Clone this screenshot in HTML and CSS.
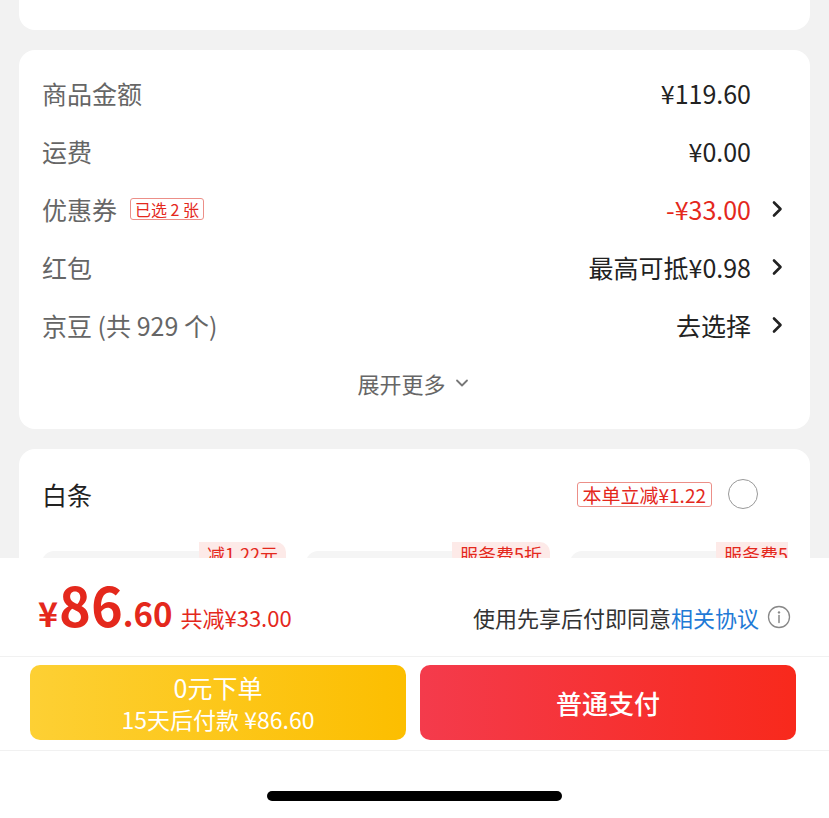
FILE: index.html
```html
<!DOCTYPE html>
<html lang="zh-CN">
<head>
    <meta charset="UTF-8">
    <meta name="viewport" content="width=device-width, initial-scale=1.0">
    <title>确认订单</title>
    <link rel="stylesheet" href="styles.css">
</head>
<body>
    <div class="page">
        <div class="card card-top"></div>

        <div class="card summary">
            <div class="row">
                <span class="label">商品金额</span>
                <span class="value">¥119.60</span>
            </div>
            <div class="row">
                <span class="label">运费</span>
                <span class="value">¥0.00</span>
            </div>
            <div class="row">
                <span class="label">优惠券 <span class="tag tag-small">已选 2 张</span></span>
                <span class="value red">-¥33.00
                    <span class="arrow"><svg width="12" height="18" viewBox="0 0 12 18"><path d="M3 2.5 L9.5 9 L3 15.5" fill="none" stroke="#222" stroke-width="2.6" stroke-linecap="round" stroke-linejoin="round"/></svg></span>
                </span>
            </div>
            <div class="row">
                <span class="label">红包</span>
                <span class="value">最高可抵¥0.98
                    <span class="arrow"><svg width="12" height="18" viewBox="0 0 12 18"><path d="M3 2.5 L9.5 9 L3 15.5" fill="none" stroke="#222" stroke-width="2.6" stroke-linecap="round" stroke-linejoin="round"/></svg></span>
                </span>
            </div>
            <div class="row">
                <span class="label">京豆 (共 929 个)</span>
                <span class="value">去选择
                    <span class="arrow"><svg width="12" height="18" viewBox="0 0 12 18"><path d="M3 2.5 L9.5 9 L3 15.5" fill="none" stroke="#222" stroke-width="2.6" stroke-linecap="round" stroke-linejoin="round"/></svg></span>
                </span>
            </div>
            <div class="more">
                展开更多
                <svg width="14" height="10" viewBox="0 0 14 10"><path d="M2 2.5 L7 7.5 L12 2.5" fill="none" stroke="#777" stroke-width="1.8" stroke-linecap="round" stroke-linejoin="round"/></svg>
            </div>
        </div>

        <div class="card baitiao">
            <div class="row">
                <span class="title">白条</span>
                <span class="pick">
                    <span class="tag">本单立减¥1.22</span>
                    <span class="radio"></span>
                </span>
            </div>
            <div class="plans">
                <div class="plan"><span class="plan-tag">减1.22元</span></div>
                <div class="plan"><span class="plan-tag">服务费5折</span></div>
                <div class="plan"><span class="plan-tag">服务费5折</span></div>
            </div>
        </div>
    </div>

    <!-- fixed footer -->
    <div class="footer">
        <div class="total">
            <div class="price">
                <span class="yen">¥</span><span class="int">86</span><span class="dec">.60</span>
                <span class="saved">共减¥33.00</span>
            </div>
            <div class="agree">
                使用先享后付即同意<span class="link">相关协议</span>
                <svg width="24" height="24" viewBox="0 0 24 24"><circle cx="12" cy="12" r="10.5" fill="none" stroke="#888" stroke-width="1.3"/><circle cx="12" cy="7.4" r="1.2" fill="#888"/><path d="M12 10.5 V17.5" stroke="#888" stroke-width="1.5" stroke-linecap="round"/></svg>
            </div>
        </div>
        <div class="buttons">
            <button class="btn btn-later">
                <span class="btn-main">0元下单</span>
                <span class="btn-sub">15天后付款 ¥86.60</span>
            </button>
            <button class="btn btn-pay">普通支付</button>
        </div>
        <div class="home-bar"></div>
    </div>
</body>
</html>
```

FILE: styles.css
```css
body {
    margin: 0;
    background-color: #f2f2f2;
    font-family: "Noto Sans CJK SC", "Noto Sans", sans-serif;
    color: #222;
    height: 818px;
    overflow: hidden;
}
.page {
    display: flex;
    flex-direction: column;
    gap: 20px;
    padding: 0 19px;
}
.card {
    background-color: white;
    border-radius: 16px;
}
.card-top {
    height: 30px;
    border-radius: 0 0 16px 16px;
}
.summary {
    padding: 14px 26px 17px 23px;
}
.row {
    height: 58px;
    display: flex;
    align-items: center;
    justify-content: space-between;
}
.label {
    font-size: 25px;
    color: #666;
    display: flex;
    align-items: center;
}
.value {
    font-size: 25px;
    color: #222;
    display: flex;
    align-items: center;
    padding-right: 33px;
}
.value.red {
    color: #e4281c;
}
.arrow {
    width: 33px;
    margin-right: -33px;
    display: flex;
    justify-content: flex-end;
    padding-right: 1px;
    box-sizing: border-box;
}
.tag {
    border: 1px solid #ec8f88;
    color: #e4281c;
    border-radius: 3px;
    font-size: 19px;
    line-height: 23px;
    padding: 0 5px;
}
.tag-small {
    font-size: 16px;
    line-height: 20px;
    margin-left: 13px;
    padding: 0 4px;
}
.more {
    height: 58px;
    display: flex;
    align-items: center;
    justify-content: center;
    gap: 9px;
    font-size: 22px;
    color: #666;
}
.baitiao {
    height: 400px;
    padding: 16px 0 0 23px;
}
.baitiao .row {
    padding-right: 52px;
}
.title {
    font-size: 25px;
    color: #222;
}
.pick {
    display: flex;
    align-items: center;
    gap: 16px;
}
.radio {
    width: 30px;
    height: 30px;
    border: 1.5px solid #999;
    border-radius: 50%;
    box-sizing: border-box;
}
.plans {
    display: flex;
    gap: 20px;
    margin-top: 19px;
    margin-right: 22px;
    overflow: hidden;
    padding-top: 9px;
}
.plan {
    flex: 0 0 244px;
    height: 120px;
    background-color: #f5f5f5;
    border-radius: 12px;
    position: relative;
}
.plan-tag {
    position: absolute;
    right: 0;
    top: -9px;
    background-color: #fdeae8;
    color: #e4281c;
    font-size: 18px;
    line-height: 24px;
    padding: 0 8px;
    border-radius: 0 10px 0 10px;
    white-space: nowrap;
}
.footer {
    position: fixed;
    left: 0;
    right: 0;
    bottom: 0;
    height: 260px;
    background-color: white;
    display: flex;
    flex-direction: column;
}
.total {
    height: 99px;
    display: flex;
    align-items: baseline;
    justify-content: space-between;
    padding: 19px 38px 0 38px;
    box-sizing: border-box;
    border-bottom: 1px solid #f1f1f1;
}
.price {
    color: #e4281c;
    display: flex;
    align-items: baseline;
    line-height: 1;
}
.yen {
    font-size: 34px;
    font-weight: 700;
}
.int {
    font-size: 54px;
    font-weight: 700;
    margin-left: 1px;
}
.dec {
    font-size: 33px;
    font-weight: 700;
}
.saved {
    font-size: 22px;
    margin-left: 8px;
}
.agree {
    font-size: 22px;
    color: #333;
    display: flex;
    align-items: center;
    line-height: 1;
    margin-bottom: 3px;
}
.link {
    color: #1f7ad6;
}
.agree svg {
    margin-left: 8px;
}
.buttons {
    display: flex;
    gap: 14px;
    padding: 8px 33px 10px 30px;
    border-bottom: 1px solid #f1f1f1;
}
.btn {
    flex: 1;
    height: 75px;
    border: none;
    border-radius: 10px;
    color: white;
    font-family: "Noto Sans CJK SC", "Noto Sans", sans-serif;
    display: flex;
    flex-direction: column;
    align-items: center;
    justify-content: center;
}
.btn-later {
    background: linear-gradient(90deg, #fdd034, #fcbe00);
}
.btn-main {
    font-size: 25px;
    line-height: 33px;
}
.btn-sub {
    font-size: 23px;
    line-height: 31px;
}
.btn-pay {
    background: linear-gradient(90deg, #f43b4c, #f8291c);
    font-size: 26px;
    font-weight: 500;
}
.home-bar {
    width: 295px;
    height: 10px;
    background-color: black;
    border-radius: 5px;
    margin: 40px auto 0;
}
```
